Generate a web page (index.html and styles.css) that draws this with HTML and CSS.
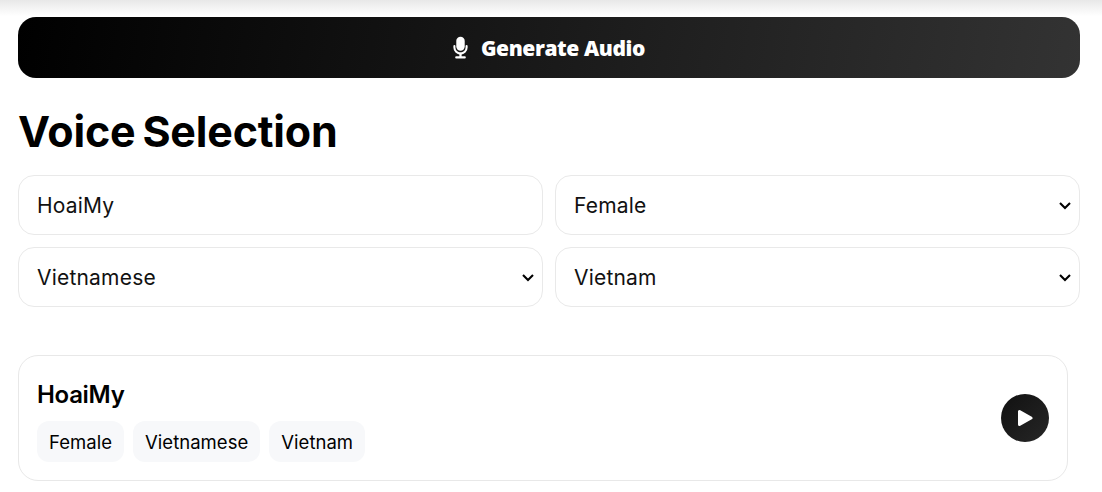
FILE: index.html
```html
<!DOCTYPE html>
<html lang="en">
<head>
<meta charset="utf-8">
<title>Voice Selection</title>
<link rel="stylesheet" href="styles.css">
</head>
<body>
<div class="top-shade"></div>
<main class="page">
  <button class="generate" type="button">
    <svg class="mic" viewBox="0 0 16 24" width="15" height="23" aria-hidden="true">
      <rect x="3.5" y="0.5" width="9" height="15" rx="4.5" fill="#fff"/>
      <path d="M1.5 10.5v1.5a6.5 6.5 0 0 0 13 0v-1.5" fill="none" stroke="#fff" stroke-width="2.2" stroke-linecap="round"/>
      <path d="M8 18.5v3M3.5 22.6h9" fill="none" stroke="#fff" stroke-width="2.4" stroke-linecap="round"/>
    </svg>
    <span>Generate Audio</span>
  </button>
  <h1 class="title">Voice Selection</h1>
  <div class="filters">
    <input class="field" type="text" value="HoaiMy">
    <select class="field"><option>Female</option></select>
    <select class="field"><option>Vietnamese</option></select>
    <select class="field"><option>Vietnam</option></select>
  </div>
  <section class="card">
    <div class="info">
      <h2 class="name">HoaiMy</h2>
      <div class="chips">
        <span class="chip">Female</span>
        <span class="chip">Vietnamese</span>
        <span class="chip">Vietnam</span>
      </div>
    </div>
    <button class="play" type="button" aria-label="Play">
      <svg viewBox="0 0 16 18" width="16" height="18" aria-hidden="true">
        <path d="M2.5 2.5v13L14 9z" fill="#fff" stroke="#fff" stroke-width="3" stroke-linejoin="round"/>
      </svg>
    </button>
  </section>
</main>
</body>
</html>
```
FILE: styles.css
```css
* { box-sizing: border-box; }
html, body { margin: 0; height: 492px; overflow: hidden; background: #fff; }
body { font-family: "Inter", "Liberation Sans", sans-serif; color: #000; position: relative; }
.top-shade {
  position: absolute; left: 0; right: 0; top: 0; height: 16px;
  background: linear-gradient(#e8e8e8, #fff);
}
.page { position: relative; padding: 17px 22px 0 18px; }
.generate {
  width: 100%; height: 61px; border: 0; border-radius: 18px;
  background: linear-gradient(100deg, #000 0%, #333 100%);
  color: #fff; display: flex; align-items: center; justify-content: center; gap: 13px;
  font: 800 21px "Open Sans", sans-serif; letter-spacing: -0.4px;
}
.mic { display: block; }
.title {
  margin: 26px 0 17px; font-size: 43px; line-height: 54px; font-weight: 700;
  letter-spacing: -0.2px; word-spacing: -3px;
}
.filters { display: grid; grid-template-columns: 1fr 1fr; gap: 12px; }
.field {
  width: 100%; height: 60px; border: 1px solid #e9e9e9; border-radius: 16px; background: #fff;
  padding: 0 18px; font: 400 21px "Inter", sans-serif; letter-spacing: 0.2px; color: #111; outline: none;
}
select.field {
  appearance: none; -webkit-appearance: none;
  background-image: url("data:image/svg+xml,%3Csvg xmlns='http://www.w3.org/2000/svg' width='14' height='9' viewBox='0 0 14 9'%3E%3Cpath d='M2 2l5 5 5-5' fill='none' stroke='%23000' stroke-width='2.1'/%3E%3C/svg%3E");
  background-repeat: no-repeat; background-position: right 7px center;
}
.card {
  width: 1050px; height: 126px; margin-top: 48px; padding: 0 18px;
  border: 1px solid #e8e8e8; border-radius: 20px;
  display: flex; align-items: center; justify-content: space-between;
}
.info { padding-top: 6px; }
.name { margin: 0 0 11px; font-size: 24px; line-height: 30px; font-weight: 600; letter-spacing: -0.3px; }
.chips { display: flex; gap: 9px; }
.chip {
  height: 41px; padding: 0 12px; border-radius: 12px; background: #f7f8fa;
  display: flex; align-items: center; font-size: 18.5px; font-weight: 400; letter-spacing: 0.03px;
}
.play {
  width: 48px; height: 48px; border: 0; border-radius: 50%; padding: 0;
  background: linear-gradient(135deg, #111, #262626);
  display: flex; align-items: center; justify-content: center;
}
```
